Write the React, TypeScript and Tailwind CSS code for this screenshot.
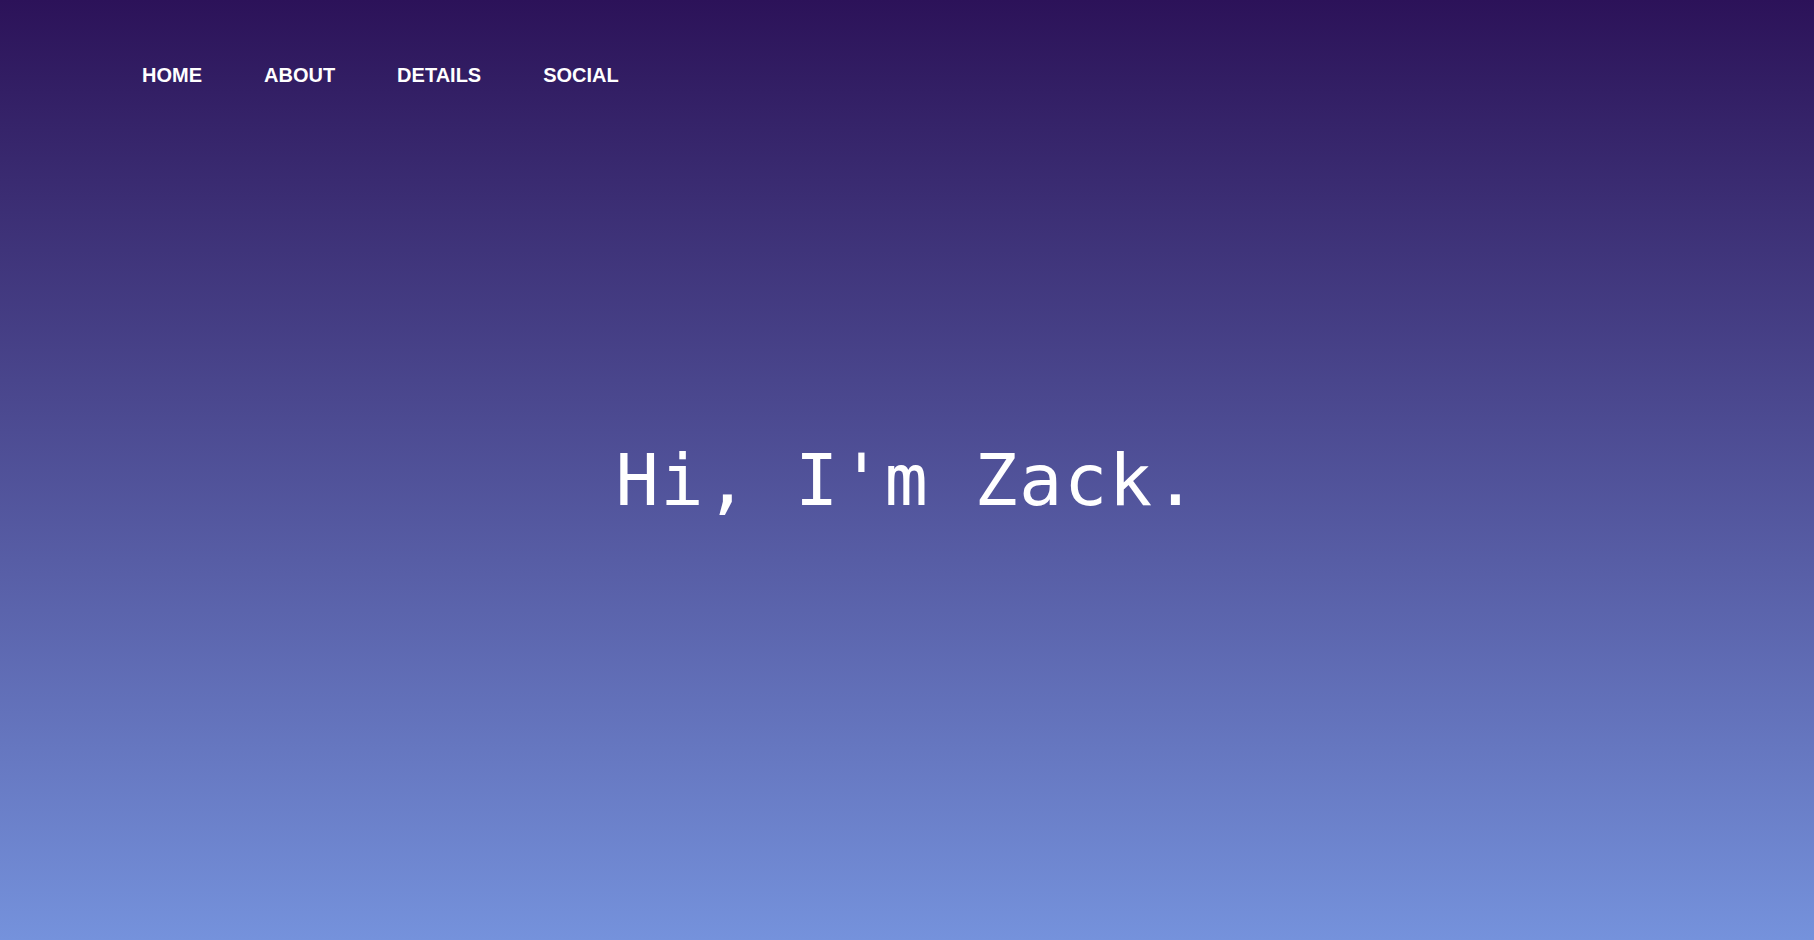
const links = ['HOME', 'ABOUT', 'DETAILS', 'SOCIAL']

export default function App() {
  return (
    <div className="flex h-[940px] w-full flex-col bg-linear-to-b from-[#2c1259] to-[#7592dc] text-white">
      <nav className="flex gap-[62px] px-[142px] pt-[60px] font-['Liberation_Sans',Arial,sans-serif] text-[20px] leading-[30px] font-bold">
        {links.map((l) => (
          <a key={l} href="#" className="text-white">
            {l}
          </a>
        ))}
      </nav>
      <main className="flex flex-1 items-center justify-center pb-[70px]">
        <h1 className="font-['DejaVu_Sans_Mono',monospace] text-[72px] leading-none tracking-[1.5px]">
          Hi, I'm Zack.
        </h1>
      </main>
    </div>
  )
}
